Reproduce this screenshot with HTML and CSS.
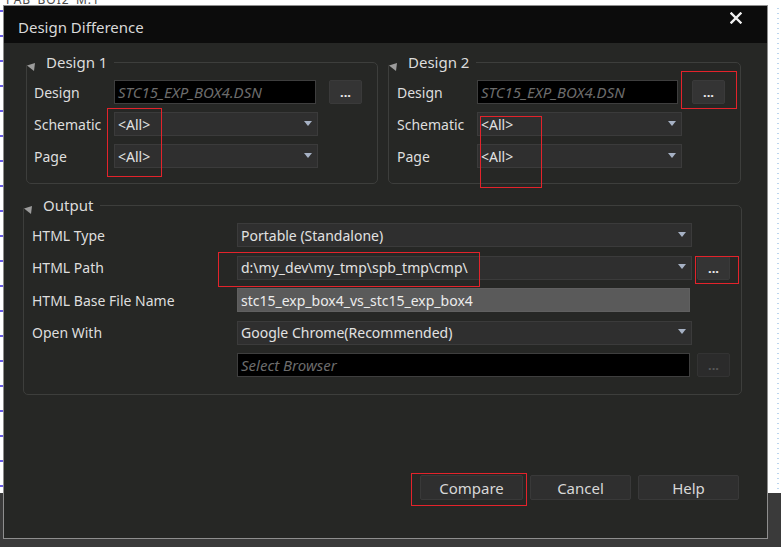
FILE: index.html
```html
<!DOCTYPE html>
<html>
<head>
<meta charset="utf-8">
<title>Design Difference</title>
<link rel="stylesheet" href="styles.css">
</head>
<body>
<div class="desk-text">PAB_BOI2_M:1</div>
<div class="desk-left"></div>
<div class="desk-right"></div>

<div class="dialog">
  <div class="titlebar">
    <span class="title">Design Difference</span>
    <svg class="close" width="12" height="12" viewBox="0 0 12 12"><path d="M1.5 1.5 L10.5 10.5 M10.5 1.5 L1.5 10.5" stroke="#f2f2f2" stroke-width="2.4" stroke-linecap="square"/></svg>
  </div>

  <div class="content">
    <div class="designs">
      <fieldset class="group design1">
        <legend><svg class="tri" width="9" height="9" viewBox="0 0 9 9"><polygon points="0,2.5 8,0 7,8" fill="#9c9c9c"/></svg>Design 1</legend>
        <div class="grid grid-d1">
          <span class="label">Design</span>
          <div class="input w202"><span class="ph">STC15_EXP_BOX4.DSN</span></div>
          <button class="dots">...</button>
          <span class="label">Schematic</span>
          <div class="select"><span>&lt;All&gt;</span><i class="arrow"></i></div>
          <span></span>
          <span class="label">Page</span>
          <div class="select"><span>&lt;All&gt;</span><i class="arrow"></i></div>
          <span></span>
        </div>
      </fieldset>

      <fieldset class="group design2">
        <legend><svg class="tri" width="9" height="9" viewBox="0 0 9 9"><polygon points="0,2.5 8,0 7,8" fill="#9c9c9c"/></svg>Design 2</legend>
        <div class="grid grid-d2">
          <span class="label">Design</span>
          <div class="input w201"><span class="ph">STC15_EXP_BOX4.DSN</span></div>
          <button class="dots">...</button>
          <span class="label">Schematic</span>
          <div class="select"><span>&lt;All&gt;</span><i class="arrow"></i></div>
          <span></span>
          <span class="label">Page</span>
          <div class="select"><span>&lt;All&gt;</span><i class="arrow"></i></div>
          <span></span>
        </div>
      </fieldset>
    </div>

    <fieldset class="group output">
      <legend><svg class="tri" width="9" height="9" viewBox="0 0 9 9"><polygon points="0,2.5 8,0 7,8" fill="#9c9c9c"/></svg>Output</legend>
      <div class="grid grid-out">
        <span class="label">HTML Type</span>
        <div class="select"><span>Portable (Standalone)</span><i class="arrow"></i></div>
        <span></span>
        <span class="label">HTML Path</span>
        <div class="select"><span>d:\my_dev\my_tmp\spb_tmp\cmp\</span><i class="arrow"></i></div>
        <button class="dots">...</button>
        <span class="label">HTML Base File Name</span>
        <div class="basefield w453"><span>stc15_exp_box4_vs_stc15_exp_box4</span></div>
        <span></span>
        <span class="label">Open With</span>
        <div class="select"><span>Google Chrome(Recommended)</span><i class="arrow"></i></div>
        <span></span>
        <span></span>
        <div class="input w453"><span class="ph">Select Browser</span></div>
        <button class="dots disabled">...</button>
      </div>
    </fieldset>

    <div class="actions">
      <button class="btn w103">Compare</button>
      <button class="btn w101">Cancel</button>
      <button class="btn w101">Help</button>
    </div>
  </div>
</div>

<div class="mark m1"></div>
<div class="mark m2"></div>
<div class="mark m3"></div>
<div class="mark m4"></div>
<div class="mark m5"></div>
<div class="mark m6"></div>
</body>
</html>
```

FILE: styles.css
```css
html, body {
  margin: 0;
  padding: 0;
}
body {
  width: 781px;
  height: 547px;
  position: relative;
  overflow: hidden;
  background: linear-gradient(to bottom, #ffffff 0, #ffffff 493px, #3a3a3a 493px, #3a3a3a 100%);
  font-family: "Noto Sans", "Open Sans", sans-serif;
  color: #dedede;
}

/* desktop behind the dialog */
.desk-text {
  position: absolute;
  left: 6px;
  top: -7px;
  font-size: 12px;
  line-height: 14px;
  color: #4a4a4a;
  letter-spacing: 1px;
}
.desk-left {
  position: absolute;
  left: 0;
  top: 0;
  width: 3px;
  height: 493px;
  background: repeating-linear-gradient(to bottom, transparent 0, transparent 10px, #6a5ce6 10px, #6a5ce6 12px, transparent 12px, transparent 25px);
}
.desk-right {
  position: absolute;
  left: 777px;
  top: 8px;
  width: 2px;
  height: 485px;
  background: repeating-linear-gradient(to bottom, #bcd6ee 0, #bcd6ee 1px, transparent 1px, transparent 5px);
}

/* dialog window */
.dialog {
  position: absolute;
  left: 3px;
  top: 5px;
  width: 765px;
  height: 534px;
  box-sizing: border-box;
  border: 1px solid #8e8e8e;
  background: #262725;
  display: flex;
  flex-direction: column;
}
.titlebar {
  height: 37px;
  flex: none;
  background: #0c0c0c;
  display: flex;
  justify-content: space-between;
  align-items: flex-start;
  padding: 0 25px 0 14px;
}
.title {
  margin-top: 11px;
  font-size: 15px;
  line-height: 20px;
  color: #d9d9d9;
}
.close {
  margin-top: 6px;
}

.content {
  flex: 1;
  display: flex;
  flex-direction: column;
  padding-left: 19px;
}
.designs {
  display: flex;
  gap: 10px;
  margin-top: 9px;
  padding-left: 3px;
}

.group {
  margin: 0;
  padding: 0;
  min-width: 0;
  border: 1px solid #3d3e3c;
  border-radius: 5px;
  box-sizing: border-box;
}
.group legend {
  padding: 0 7px 0 0;
  margin: 0;
  height: 20px;
  font-size: 15px;
  line-height: 20px;
  color: #dcdcdc;
}
.tri {
  vertical-align: -4px;
  margin-left: 0;
  margin-right: 10px;
}
.design1 { width: 352px; }
.design2 { width: 353px; }
.output {
  width: 719px;
  margin-top: 11px;
}

.grid {
  display: grid;
  grid-auto-rows: 24px;
  align-items: center;
}
.grid-d1 {
  grid-template-columns: 69px 204px 33px;
  column-gap: 11px;
  row-gap: 8px;
  padding: 8px 0 15px 7px;
}
.grid-d2 {
  grid-template-columns: 70px 205px 33px;
  column-gap: 10px;
  row-gap: 8px;
  padding: 8px 0 15px 8px;
}
.grid-out {
  grid-template-columns: 200px 455px 33px;
  column-gap: 5px;
  row-gap: 8.5px;
  padding: 8px 0 17px 8px;
}

.label {
  font-size: 14px;
  color: #dedede;
  white-space: nowrap;
}

.input, .select, .basefield {
  height: 24px;
  box-sizing: border-box;
  display: flex;
  align-items: center;
  padding-left: 3px;
  font-size: 14px;
  white-space: nowrap;
  overflow: hidden;
}
.input {
  background: #000;
  border: 1px solid #3e3e3e;
}
.ph {
  font-style: italic;
  font-size: 15px;
  color: #6c6c6c;
}
.select {
  background: #2f2f2f;
  border: 1px solid #3b3b3b;
  justify-content: space-between;
  padding-right: 5px;
  color: #e2e2e2;
}
.basefield {
  background: #5a5a5a;
  border: 1px solid #606060;
  color: #ececec;
}
.w201 { width: 201px; }
.w202 { width: 202px; }
.w453 { width: 453px; }

.arrow {
  width: 0;
  height: 0;
  border-left: 4.5px solid transparent;
  border-right: 4.5px solid transparent;
  border-top: 5px solid #a6b1c4;
  margin-top: -2px;
}

.dots {
  height: 24px;
  width: 33px;
  padding: 0;
  box-sizing: border-box;
  background: #343434;
  border: 1px solid #3a3a3a;
  border-radius: 2px;
  color: #ececec;
  font-family: inherit;
  font-size: 13px;
  font-weight: bold;
  line-height: 20px;
}
.dots.disabled {
  background: #2b2b2b;
  border-color: #333;
  color: #575757;
}

.actions {
  margin-top: auto;
  display: flex;
  justify-content: flex-end;
  gap: 7px;
  padding: 0 28px 38px 0;
}
.btn {
  height: 25px;
  box-sizing: border-box;
  background: #2f2f2f;
  border: 1px solid #393939;
  border-radius: 2px;
  color: #d8d8d8;
  font-family: inherit;
  font-size: 15px;
  line-height: 20px;
  padding: 0;
}
.w103 { width: 103px; }
.w101 { width: 101px; }

/* red annotation boxes drawn over the screenshot */
.mark {
  position: absolute;
  box-sizing: border-box;
  border: 1px solid #e3232b;
}
.m1 { left: 107px; top: 108px; width: 55px; height: 69px; }
.m2 { left: 681px; top: 71px; width: 56px; height: 38px; }
.m3 { left: 480px; top: 116px; width: 62px; height: 72px; }
.m4 { left: 218px; top: 252px; width: 262px; height: 35px; }
.m5 { left: 695px; top: 256px; width: 44px; height: 28px; }
.m6 { left: 411px; top: 473px; width: 116px; height: 33px; }
```
